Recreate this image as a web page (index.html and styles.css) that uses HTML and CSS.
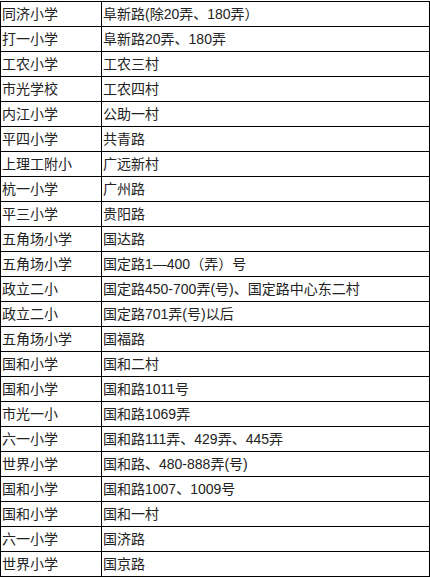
FILE: index.html
```html
<!DOCTYPE html>
<html lang="zh">
<head>
<meta charset="utf-8">
<link rel="stylesheet" href="styles.css">
</head>
<body>
<table class="list">
<colgroup><col class="c1"><col class="c2"></colgroup>
<tbody>
<tr><td>同济小学</td><td>阜新路(除20弄、180弄）</td></tr>
<tr><td>打一小学</td><td>阜新路20弄、180弄</td></tr>
<tr><td>工农小学</td><td>工农三村</td></tr>
<tr><td>市光学校</td><td>工农四村</td></tr>
<tr><td>内江小学</td><td>公助一村</td></tr>
<tr><td>平四小学</td><td>共青路</td></tr>
<tr><td>上理工附小</td><td>广远新村</td></tr>
<tr><td>杭一小学</td><td>广州路</td></tr>
<tr><td>平三小学</td><td>贵阳路</td></tr>
<tr><td>五角场小学</td><td>国达路</td></tr>
<tr><td>五角场小学</td><td>国定路1—400（弄）号</td></tr>
<tr><td>政立二小</td><td>国定路450-700弄(号)、国定路中心东二村</td></tr>
<tr><td>政立二小</td><td>国定路701弄(号)以后</td></tr>
<tr><td>五角场小学</td><td>国福路</td></tr>
<tr><td>国和小学</td><td>国和二村</td></tr>
<tr><td>国和小学</td><td>国和路1011号</td></tr>
<tr><td>市光一小</td><td>国和路1069弄</td></tr>
<tr><td>六一小学</td><td>国和路111弄、429弄、445弄</td></tr>
<tr><td>世界小学</td><td>国和路、480-888弄(号)</td></tr>
<tr><td>国和小学</td><td>国和路1007、1009号</td></tr>
<tr><td>国和小学</td><td>国和一村</td></tr>
<tr><td>六一小学</td><td>国济路</td></tr>
<tr><td>世界小学</td><td>国京路</td></tr>
</tbody>
</table>
</body>
</html>
```
FILE: styles.css
```css
html, body {
  margin: 0;
  padding: 0;
  background: #ffffff;
}
body {
  padding-top: 1px;
  font-family: "Liberation Sans", "Noto Sans CJK SC", sans-serif;
  font-size: 14px;
  color: #222222;
}
.list {
  border-collapse: collapse;
  width: 429px;
  table-layout: fixed;
}
.c1 { width: 101px; }
.c2 { width: 328px; }
.list td {
  border: 1px solid #000000;
  height: 24px;
  padding: 0 0 0 1px;
  line-height: 24px;
  white-space: nowrap;
  vertical-align: middle;
}
```
